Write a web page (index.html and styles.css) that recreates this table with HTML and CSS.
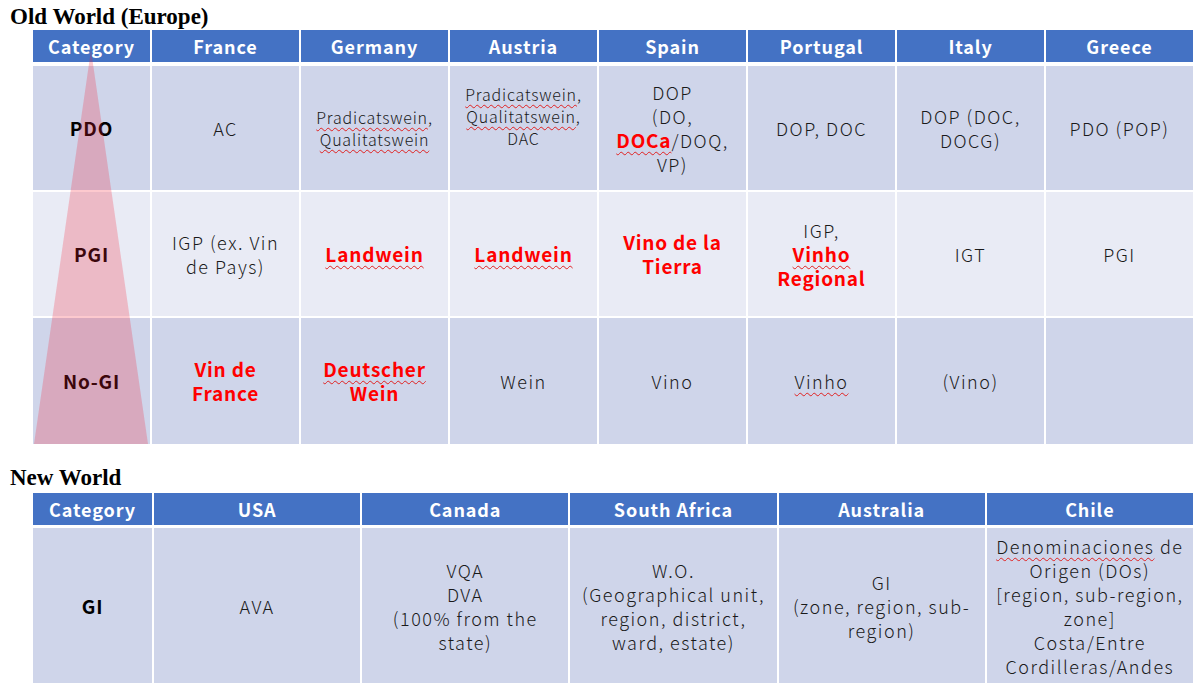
FILE: index.html
```html
<!DOCTYPE html>
<html>
<head>
<meta charset="utf-8">
<link rel="stylesheet" href="styles.css">
</head>
<body>
<div class="page">
  <h2 class="title old">Old World (Europe)</h2>
  <div class="wrap">
    <div class="grid eu">
      <div class="hd">Category</div>
      <div class="hd">France</div>
      <div class="hd">Germany</div>
      <div class="hd">Austria</div>
      <div class="hd">Spain</div>
      <div class="hd">Portugal</div>
      <div class="hd">Italy</div>
      <div class="hd">Greece</div>

      <div class="c dark cat"><div>PDO</div></div>
      <div class="c dark"><div>AC</div></div>
      <div class="c dark small"><div><span class="sp">Pradicatswein</span>,<br><span class="sp">Qualitatswein</span></div></div>
      <div class="c dark small top"><div><span class="sp">Pradicatswein</span>,<br><span class="sp">Qualitatswein</span>,<br>DAC</div></div>
      <div class="c dark"><div>DOP<br>(DO,<br><b class="red sp">DOCa</b>/DOQ,<br>VP)</div></div>
      <div class="c dark"><div>DOP, DOC</div></div>
      <div class="c dark"><div>DOP (DOC,<br>DOCG)</div></div>
      <div class="c dark"><div>PDO (POP)</div></div>

      <div class="c light cat"><div>PGI</div></div>
      <div class="c light"><div>IGP (ex. Vin<br>de Pays)</div></div>
      <div class="c light"><div><b class="red sp">Landwein</b></div></div>
      <div class="c light"><div><b class="red sp">Landwein</b></div></div>
      <div class="c light"><div><b class="red">Vino de la<br>Tierra</b></div></div>
      <div class="c light"><div>IGP,<br><b class="red"><span class="sp">Vinho</span><br>Regional</b></div></div>
      <div class="c light"><div>IGT</div></div>
      <div class="c light"><div>PGI</div></div>

      <div class="c dark cat"><div>No-GI</div></div>
      <div class="c dark"><div><b class="red">Vin de<br>France</b></div></div>
      <div class="c dark"><div><b class="red"><span class="sp">Deutscher</span><br>Wein</b></div></div>
      <div class="c dark"><div>Wein</div></div>
      <div class="c dark"><div>Vino</div></div>
      <div class="c dark"><div><span class="sp">Vinho</span></div></div>
      <div class="c dark"><div>(Vino)</div></div>
      <div class="c dark"><div></div></div>
    </div>
    <svg class="pyramid" width="120" height="400" viewBox="0 0 120 400" aria-hidden="true">
      <polygon points="58,0 1,394 115,394" fill="rgba(245,30,50,0.24)"/>
    </svg>
  </div>

  <h2 class="title new">New World</h2>
  <div class="grid nw">
    <div class="hd">Category</div>
    <div class="hd">USA</div>
    <div class="hd">Canada</div>
    <div class="hd">South Africa</div>
    <div class="hd">Australia</div>
    <div class="hd">Chile</div>

    <div class="c dark cat"><div>GI</div></div>
    <div class="c dark"><div>AVA</div></div>
    <div class="c dark"><div>VQA<br>DVA<br>(100% from the<br>state)</div></div>
    <div class="c dark"><div>W.O.<br>(Geographical unit,<br>region, district,<br>ward, estate)</div></div>
    <div class="c dark"><div>GI<br>(zone, region, sub-<br>region)</div></div>
    <div class="c dark"><div><span class="sp">Denominaciones</span> de<br>Origen (DOs)<br>[region, sub-region,<br>zone]<br>Costa/Entre<br>Cordilleras/Andes</div></div>
  </div>
</div>
</body>
</html>
```
FILE: styles.css
```css
html, body {
  margin: 0;
  padding: 0;
  background: #ffffff;
}

.page {
  width: 1198px;
  display: flex;
  flex-direction: column;
  font-family: "Noto Sans CJK JP", "Noto Sans", sans-serif;
  color: #1a1a1a;
}

.title {
  margin: 0;
  padding-left: 10px;
  font-family: "Liberation Serif", "DejaVu Serif", serif;
  font-weight: bold;
  font-size: 23px;
  color: #000;
  white-space: nowrap;
}

.title.old {
  height: 30px;
  line-height: 34px;
}

.title.new {
  height: 49px;
  line-height: 68px;
}

.wrap {
  position: relative;
  margin-left: 33px;
  width: 1160px;
}

.grid {
  display: grid;
  column-gap: 2px;
  row-gap: 2px;
  width: 1160px;
}

.eu {
  grid-template-columns: 117px repeat(7, 147px);
  grid-template-rows: 34px 124px 124px 126px;
}

.eu .hd {
  margin-bottom: 2px;
}

.nw {
  margin-left: 33px;
  grid-template-columns: 119px repeat(5, 206.2px);
  grid-template-rows: 32px 155px;
  row-gap: 3px;
}

.hd {
  background: #4472c4;
  color: #ffffff;
  font-weight: bold;
  font-size: 18px;
  display: flex;
  align-items: center;
  justify-content: center;
  letter-spacing: 0.9px;
  white-space: nowrap;
}

.c {
  display: flex;
  align-items: center;
  justify-content: center;
  text-align: center;
  font-size: 18px;
  line-height: 24px;
  font-weight: 300;
  letter-spacing: 1.5px;
  white-space: nowrap;
}

.c.small {
  font-size: 16px;
  line-height: 22px;
  letter-spacing: 0.8px;
}

.c.top {
  align-items: flex-start;
  padding-top: 17px;
}

.dark {
  background: #cfd5ea;
}

.light {
  background: #e9ebf5;
}

.cat {
  font-weight: bold;
  font-size: 19px;
  color: #000;
  letter-spacing: 0.8px;
}

.red {
  color: #ff0000;
  font-weight: bold;
  font-size: 19px;
  letter-spacing: 0.8px;
}

.sp {
  text-decoration: underline wavy #e02020;
  text-decoration-thickness: 1px;
  text-underline-offset: 3px;
}

.pyramid {
  position: absolute;
  left: 0;
  top: 20px;
  pointer-events: none;
}
```
